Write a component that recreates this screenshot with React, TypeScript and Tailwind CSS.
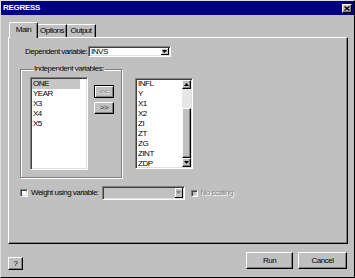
import React from 'react';

const raised = 'border border-t-white border-l-white border-r-black border-b-black shadow-[inset_-1px_-1px_0_#808080]';
const sunken = 'border border-t-[#808080] border-l-[#808080] border-r-white border-b-white shadow-[inset_1px_1px_0_#404040,inset_-1px_-1px_0_#dfdfdf]';

const Arrow: React.FC<{ up?: boolean; color?: string }> = ({ up, color = '#000' }) => (
  <svg width="5" height="3" viewBox="0 0 5 3" className={up ? 'rotate-180' : ''}>
    <polygon points="0,0 5,0 2.5,3" fill={color} />
  </svg>
);

const Combo: React.FC<{ value?: string; disabled?: boolean; className: string }> = ({ value, disabled, className }) => (
  <div className={`${sunken} flex items-stretch p-[1px] ${disabled ? 'bg-[#c0c0c0]' : 'bg-white'} ${className}`}>
    <span className="flex-1 pl-[1px] leading-[8px] flex items-center">{value}</span>
    <div className="w-[8px] bg-[#c0c0c0] border-r border-b border-r-black border-b-black shadow-[inset_1px_1px_0_#fff] flex items-center justify-center">
      <Arrow color={disabled ? '#808080' : '#000'} />
    </div>
  </div>
);

const Button: React.FC<{ label: string; className: string; disabled?: boolean }> = ({ label, className, disabled }) => (
  <div className={`${raised} flex items-center justify-center bg-[#c0c0c0] ${className}`}>
    <span className={disabled ? 'text-[#808080] [text-shadow:1px_1px_0_#fff]' : ''}>{label}</span>
  </div>
);

const leftItems = ['ONE', 'YEAR', 'X3', 'X4', 'X5'];
const rightItems = ['INFL', 'Y', 'X1', 'X2', 'ZI', 'ZT', 'ZG', 'ZINT', 'ZDP'];

export default function App() {
  return (
    <div className="w-[355px] h-[278px] bg-[#c0c0c0] border border-t-[#dfdfdf] border-l-[#dfdfdf] border-r-black border-b-black flex flex-col font-['Liberation_Sans',Arial,sans-serif] text-[8px] tracking-[-0.5px] text-black leading-[10px] overflow-hidden">
      {/* Title bar */}
      <div className="h-[14px] bg-[#000080] flex items-center justify-between pl-[2px] pr-[2px]">
        <span className="text-white font-bold tracking-[-0.3px]">REGRESS</span>
        <div className={`${raised} w-[10px] h-[9px] bg-[#c0c0c0] flex items-center justify-center`}>
          <svg width="6" height="5" viewBox="0 0 6 5">
            <path d="M0.5 0.5 L5.5 4.5 M5.5 0.5 L0.5 4.5" stroke="#000" strokeWidth="1.3" />
          </svg>
        </div>
      </div>

      <div className="flex-1 flex flex-col px-[7px] pt-[7px]">
        {/* Tabs */}
        <div className="flex items-end h-[15px]">
          <div className="relative z-10 ml-[1px] -mb-[1px] w-[29px] h-[16px] bg-[#c0c0c0] border-t border-l border-r border-t-white border-l-white border-r-black shadow-[inset_-1px_0_0_#808080] rounded-t-[2px] flex items-center justify-center pb-[1px]">
            Main
          </div>
          <div className="w-[29px] h-[13px] border-t border-r border-t-white border-r-black shadow-[inset_-1px_0_0_#808080] flex items-center justify-center">
            Options
          </div>
          <div className="w-[29px] h-[13px] border-t border-r border-t-white border-r-black shadow-[inset_-1px_0_0_#808080] flex items-center justify-center">
            Output
          </div>
        </div>

        {/* Panel */}
        <div className="w-[340px] h-[207px] border border-t-white border-l-white border-r-black border-b-black shadow-[inset_-1px_-1px_0_#808080] px-[11px] pt-[8px] flex flex-col">
          <div className="flex items-center ml-[5px]">
            <span>Dependent variable:</span>
            <Combo value="INVS" className="ml-[1px] w-[83px] h-[11px]" />
          </div>

          <div className="flex items-start mt-[7px]">
            <fieldset className="w-[102px] border border-[#808080] shadow-[inset_1px_1px_0_#fff,1px_1px_0_#fff] pl-[9px] pr-[7px] pb-[7px]">
              <legend className="ml-[3px] px-[1px] leading-[10px]">Independent variables:</legend>
              <div className="flex items-start mt-[3px]">
                <div className={`${sunken} bg-white w-[58px] h-[93px] p-[1px]`}>
                  <div className="w-[48px] h-[10px] bg-[#c6c6c6]" />
                  <div className="-mt-[10px] pl-[1px]">
                    {leftItems.map((it) => (
                      <div key={it} className="h-[10px] leading-[10px]">{it}</div>
                    ))}
                  </div>
                </div>
                <div className="ml-[6px] mt-[8px] flex flex-col">
                  <div className="w-[20px] h-[13px] border border-black bg-[#c0c0c0] shadow-[inset_1px_1px_0_#fff,inset_-1px_-1px_0_#808080] flex items-center justify-center">
                    <span className="text-[#808080] [text-shadow:1px_1px_0_#fff]">&lt;&lt;</span>
                  </div>
                  <Button label=">>" className="mt-[4px] w-[20px] h-[12px] text-[#303030]" />
                </div>
              </div>
            </fieldset>

            <div className={`${sunken} bg-white ml-[13px] mt-[14px] w-[58px] h-[91px] p-[1px] flex`}>
              <div className="flex-1 overflow-hidden pl-[1px] -mt-[1px]">
                {rightItems.map((it) => (
                  <div key={it} className="h-[10px] leading-[10px]">{it}</div>
                ))}
              </div>
              <div className="w-[9px] flex flex-col">
                <div className={`${raised} h-[9px] bg-[#c0c0c0] flex items-center justify-center`}>
                  <Arrow up />
                </div>
                <div className="h-[19px] bg-[#e6e6e6]" />
                <div className={`${raised} flex-1 bg-[#c0c0c0]`} />
                <div className={`${raised} h-[9px] bg-[#c0c0c0] flex items-center justify-center`}>
                  <Arrow />
                </div>
              </div>
            </div>
          </div>

          {/* Weight row */}
          <div className="flex items-center mt-[8px] h-[14px]">
            <div className={`${sunken} w-[8px] h-[8px] bg-white`} />
            <span className="ml-[3px]">Weight using variable:</span>
            <Combo disabled className="ml-[3px] w-[83px] h-[14px]" />
            <div className={`${sunken} ml-[6px] w-[7px] h-[7px] bg-[#c0c0c0]`} />
            <span className="ml-[3px] text-[#8a8a8a] [text-shadow:1px_1px_0_#fff]">No scaling</span>
          </div>
        </div>

        {/* Bottom buttons */}
        <div className="flex items-end justify-between mt-[8px]">
          <Button label="?" className="w-[15px] h-[13px] mb-[-1px]" />
          <div className="flex gap-[5px]">
            <Button label="Run" className="w-[47px] h-[17px]" />
            <Button label="Cancel" className="w-[49px] h-[17px]" />
          </div>
        </div>
      </div>
    </div>
  );
}
